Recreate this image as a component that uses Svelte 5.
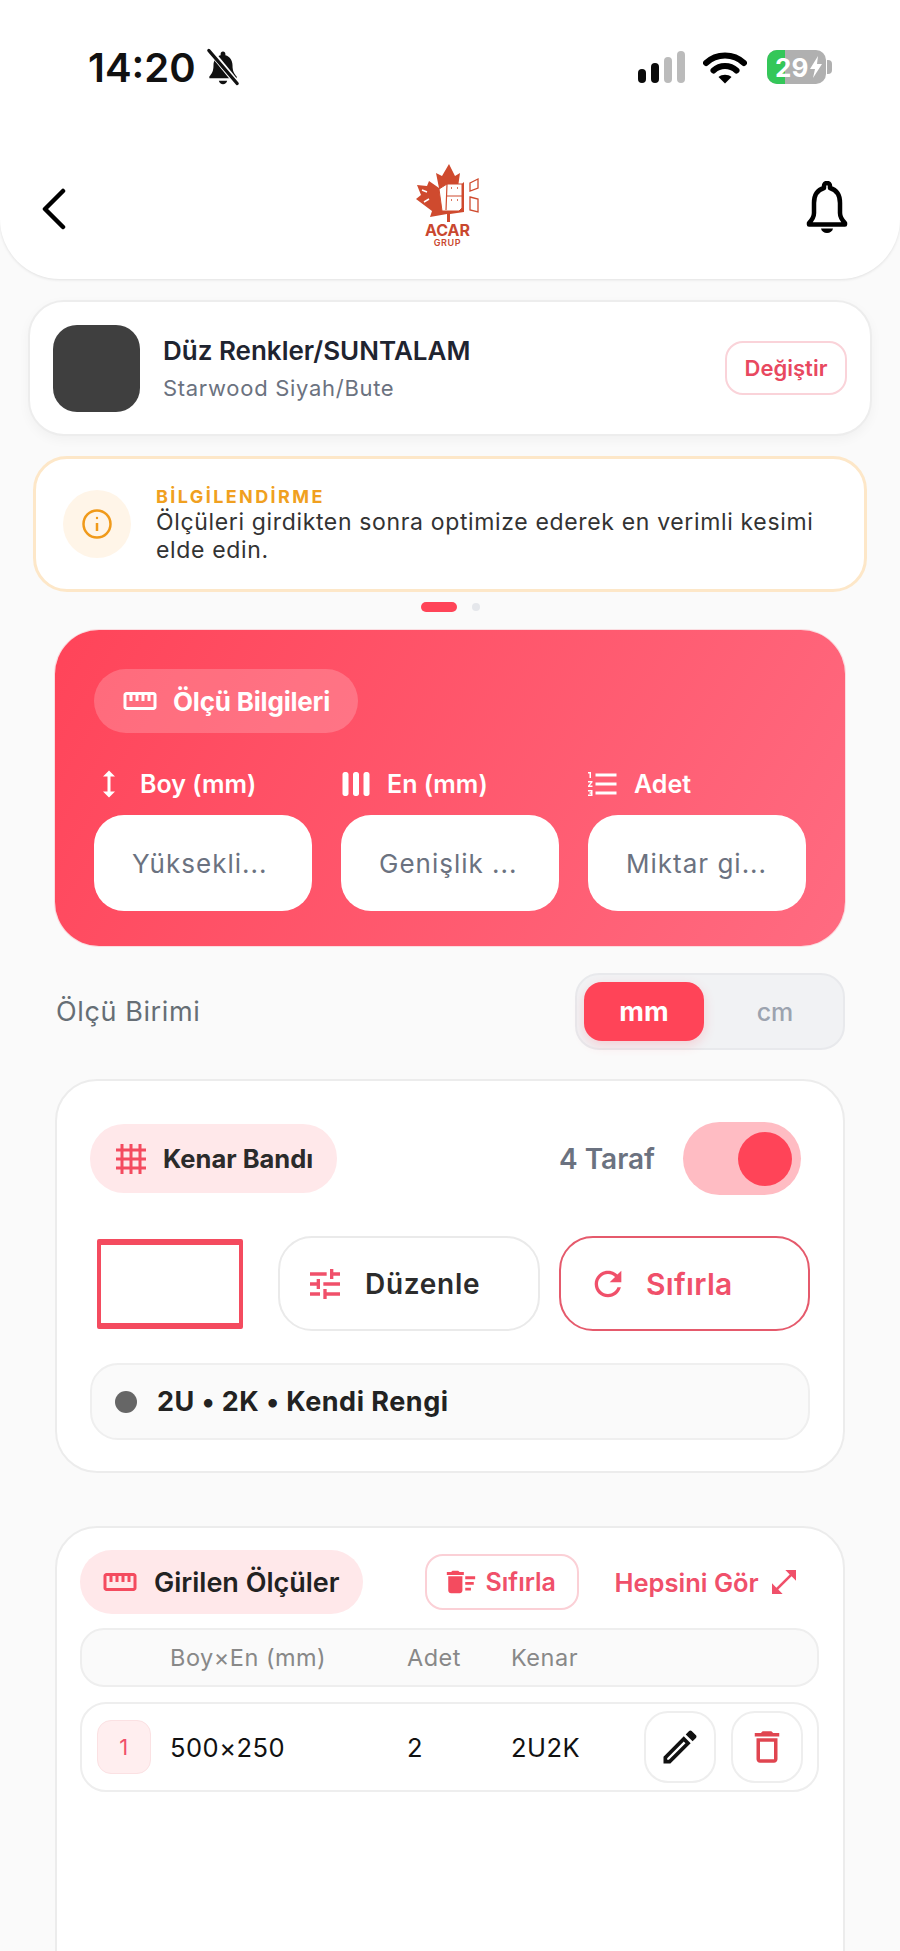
<script>
  const fields = [
    { label: 'Boy (mm)', hint: 'Yüksekli...', icon: 'M13 6.99h3L12 3 8 6.99h3v10.02H8L12 21l4-3.99h-3z' },
    { label: 'En (mm)', hint: 'Genişlik ...', icon: 'M3 5.5C3 4.7 3.7 4 4.5 4h1C6.3 4 7 4.7 7 5.5v13c0 .8-.7 1.5-1.5 1.5h-1C3.700 20 3 19.300 3 18.500zM10 5.500C10 4.700 10.700 4 11.500 4h1c.8 0 1.500.7 1.500 1.500v13c0 .8-.7 1.500-1.500 1.500h-1c-.8 0-1.500-.7-1.500-1.500zM17 5.500C17 4.700 17.700 4 18.500 4h1c.8 0 1.500.7 1.500 1.500v13c0 .8-.7 1.500-1.500 1.500h-1c-.8 0-1.500-.7-1.500-1.500z' },
    { label: 'Adet', hint: 'Miktar gi...', icon: 'M2 17h2v.5H3v1h1v.5H2v1h3v-4H2v1zm1-9h1V4H2v1h1v3zm-1 3h1.800L2 13.100v.9h3v-1H3.200L5 10.900V10H2v1zm5-6v2h14V5H7zm0 14h14v-2H7v2zm0-6h14v-2H7v2z' }
  ]
  const ruler = 'M21 6H3c-1.100 0-2 .9-2 2v8c0 1.100.9 2 2 2h18c1.100 0 2-.9 2-2V8c0-1.100-.9-2-2-2zm0 10H3V8h2v4h2V8h2v4h2V8h2v4h2V8h2v4h2V8h2v8z'
</script>

<div class="screen">
  <header class="top">
    <div class="status">
      <div class="clock">
        <span class="time">14:20</span>
        <svg class="silent" viewBox="0 0 32 32">
          <path d="M16 3c-1.300 0-2 .9-2 2v1c-4 1-6 4.500-6 8.500 0 5-1.300 7-3.500 9.500v1.500h23V24c-2.200-2.500-3.500-4.500-3.500-9.500 0-4-2-7.500-6-8.500V5c0-1.100-.7-2-2-2z" fill="#111" />
          <path d="M12.500 27.500h7c-.4 1.800-1.800 3-3.500 3s-3.100-1.200-3.500-3z" fill="#111" />
          <path d="M5 2l23 28" stroke="#fff" stroke-width="5" />
          <path d="M4 2l24 28" stroke="#111" stroke-width="2.600" stroke-linecap="round" />
        </svg>
      </div>
      <div class="sys">
        <div class="signal">
          <i class="on" style="height: 14px"></i>
          <i class="on" style="height: 20px"></i>
          <i style="height: 26px"></i>
          <i style="height: 32px"></i>
        </div>
        <svg class="wifi" viewBox="0 0 44 34">
          <path d="M3 13C13.500 3 30.500 3 41 13" />
          <path d="M10.500 20.500C17 14.500 27 14.500 33.500 20.500" />
          <path d="M22 33.500l-6.500-6.500c3.500-3 9.500-3 13 0z" class="wedge" />
        </svg>
        <div class="battery">
          <div class="cell">
            <span class="charge"></span>
            <span class="pct">29</span>
            <svg viewBox="0 0 14 24"><path d="M9 1L1 14h5l-2 9 9-14H8z" fill="#fff" /></svg>
          </div>
          <span class="nub"></span>
        </div>
      </div>
    </div>
    <div class="nav">
      <svg class="back" viewBox="0 0 26 42"><path d="M22 3L4 21l18 18" /></svg>
      <div class="logo">
        <svg viewBox="0 0 64 58">
          <path d="M33 0l6 12 5-3-2 14 6-5v30l-14 2v8h-3v-8l-17 3 2-6L0 35l5-4-4-10 10 1 2-5 10 7-3-15 6 3z" fill="#cf4a2e" />
          <path d="M23 25l8-5h15v24l-3 3H26z" fill="#fff" stroke="#cf4a2e" stroke-width="1" />
          <path d="M31 20l-1 26M31 32h15" stroke="#cf4a2e" stroke-width="1.200" fill="none" />
          <path d="M35 24h1M41 24h1M35 36h1M41 36h1" stroke="#cf4a2e" stroke-width="1.600" />
          <path d="M54 19l8-4v9l-8 3zM54 33l8 2v13l-8-2z" fill="#fff" stroke="#cf4a2e" stroke-width="1.300" />
          <path d="M6 26l5 2M8 38l5-3" stroke="#fff" stroke-width="1.500" />
        </svg>
        <span class="acar">ACAR</span>
        <span class="grup">GRUP</span>
      </div>
      <svg class="bell" viewBox="0 0 42 54">
        <path d="M21 2c-1.800 0-3 1.400-3 3v2C11 9 8 15 8 22v10c0 4-2 7-5 10v1.500h36V42c-3-3-5-6-5-10V22c0-7-3-13-10-15V5c0-1.600-1.200-3-3-3z" class="bell-body" />
        <path d="M15 47.500h12c-.6 2.800-3 4.500-6 4.500s-5.400-1.700-6-4.500z" fill="#000" />
      </svg>
    </div>
  </header>

  <main class="content">
    <section class="material">
      <div class="swatch"></div>
      <div class="material-text">
        <div class="material-name">Düz Renkler/SUNTALAM</div>
        <div class="material-sub">Starwood Siyah/Bute</div>
      </div>
      <button class="change">Değiştir</button>
    </section>

    <section class="notice">
      <div class="notice-icon">
        <svg viewBox="0 0 32 32">
          <circle cx="16" cy="16" r="13.500" />
          <path d="M16 15v8" />
          <circle cx="16" cy="10" r="1.200" class="info-dot" />
        </svg>
      </div>
      <div class="notice-text">
        <div class="notice-title">BİLGİLENDİRME</div>
        <p>Ölçüleri girdikten sonra optimize ederek en verimli kesimi elde edin.</p>
      </div>
    </section>

    <div class="dots"><span class="active"></span><span></span></div>

    <div class="inner">
      <section class="measure">
        <div class="measure-pill">
          <svg viewBox="0 0 24 24"><path d={ruler} /></svg>
          Ölçü Bilgileri
        </div>
        <div class="fields">
          {#each fields as f}
            <div class="field">
              <div class="field-label">
                <svg viewBox="0 0 24 24"><path d={f.icon} /></svg>
                {f.label}
              </div>
              <div class="input">{f.hint}</div>
            </div>
          {/each}
        </div>
      </section>

      <div class="unit-row">
        <span class="unit-label">Ölçü Birimi</span>
        <div class="segment">
          <span class="seg on">mm</span>
          <span class="seg">cm</span>
        </div>
      </div>

      <section class="panel edge">
        <div class="edge-head">
          <div class="pill big">
            <svg viewBox="0 0 24 24"><path d="M22 7V5h-3V2h-2v3h-4V2h-2v3H7V2H5v3H2v2h3v4H2v2h3v4H2v2h3v3h2v-3h4v3h2v-3h4v3h2v-3h3v-2h-3v-4h3v-2h-3V7h3zM7 7h4v4H7V7zm0 10v-4h4v4H7zm10 0h-4v-4h4v4zm0-6h-4V7h4v4z" /></svg>
            Kenar Bandı
          </div>
          <div class="sides">
            <span>4 Taraf</span>
            <div class="toggle"><i></i></div>
          </div>
        </div>
        <div class="edge-actions">
          <div class="preview"></div>
          <button class="action edit">
            <svg viewBox="0 0 24 24"><path d="M3 17v2h6v-2H3zM3 5v2h10V5H3zm10 16v-2h8v-2h-8v-2h-2v6h2zM7 9v2H3v2h4v2h2V9H7zm14 4v-2H11v2h10zm-6-4h2V7h4V5h-4V3h-2v6z" /></svg>
            Düzenle
          </button>
          <button class="action reset">
            <svg viewBox="0 0 24 24"><path d="M17.650 6.350C16.200 4.900 14.210 4 12 4c-4.420 0-7.990 3.580-7.990 8s3.570 8 7.990 8c3.730 0 6.840-2.550 7.730-6h-2.080c-.82 2.330-3.040 4-5.650 4-3.310 0-6-2.690-6-6s2.690-6 6-6c1.660 0 3.140.69 4.220 1.780L13 11h7V4l-2.350 2.350z" /></svg>
            Sıfırla
          </button>
        </div>
        <div class="summary">
          <i></i>
          2U • 2K • Kendi Rengi
        </div>
      </section>

      <section class="panel entries">
        <div class="entries-head">
          <div class="pill">
            <svg viewBox="0 0 24 24"><path d={ruler} /></svg>
            Girilen Ölçüler
          </div>
          <button class="clear">
            <svg viewBox="0 0 24 24"><path d="M15 16h4v2h-4zm0-8h7v2h-7zm0 4h6v2h-6zM3 18c0 1.100.9 2 2 2h6c1.100 0 2-.9 2-2V8H3v10zM14 5h-3l-1-1H6L5 5H2v2h12z" /></svg>
            Sıfırla
          </button>
          <button class="all">
            Hepsini Gör
            <svg viewBox="0 0 24 24"><path d="M21 11V3h-8l3.290 3.290-10 10L3 13v8h8l-3.290-3.290 10-10z" /></svg>
          </button>
        </div>
        <div class="thead">
          <span class="c1">Boy×En (mm)</span>
          <span class="c2">Adet</span>
          <span class="c3">Kenar</span>
        </div>
        <div class="trow">
          <span class="index">1</span>
          <span class="c1">500×250</span>
          <span class="c2">2</span>
          <span class="c3">2U2K</span>
          <div class="row-actions">
            <button class="icon-btn">
              <svg class="pencil" viewBox="0 0 24 24"><path d="M3 17.250V21h3.750L17.810 9.940l-3.750-3.750L3 17.250zM5.920 19H5v-.92l9.060-9.060.92.92L5.920 19zM20.710 7.040c.39-.39.39-1.020 0-1.410l-2.340-2.340c-.2-.2-.45-.29-.71-.29s-.51.1-.7.29l-1.830 1.830 3.750 3.750 1.830-1.830z" fill="#111" /></svg>
            </button>
            <button class="icon-btn">
              <svg viewBox="0 0 24 24"><path d="M6 19c0 1.100.9 2 2 2h8c1.100 0 2-.9 2-2V7H6v12zM8 9h8v10H8V9zm7.500-5l-1-1h-5l-1 1H5v2h14V4z" fill="#e04550" /></svg>
            </button>
          </div>
        </div>
      </section>
    </div>
  </main>
</div>

<style>
  :global(body) {
    margin: 0;
    background: #fafafa;
  }

  .screen {
    width: 900px;
    height: 1951px;
    overflow: hidden;
    background: #fafafa;
    font-family: Inter, "Noto Sans", sans-serif;
    color: #222;
  }

  button {
    font-family: inherit;
    background: #fff;
    cursor: pointer;
  }

  svg {
    display: block;
    flex: none;
  }

  .top {
    height: 279px;
    box-sizing: border-box;
    background: #fff;
    border-radius: 0 0 60px 60px;
    box-shadow: 0 1px 3px rgba(0, 0, 0, 0.1);
    padding: 46px 28px 0 36px;
  }

  .status {
    display: flex;
    justify-content: space-between;
    align-items: center;
    height: 42px;
    padding: 0 40px 0 52px;
  }

  .clock {
    display: flex;
    align-items: center;
    gap: 8px;
  }

  .time {
    font-size: 40px;
    font-weight: 600;
    color: #111;
  }

  .silent {
    width: 38px;
    height: 38px;
  }

  .sys {
    display: flex;
    align-items: center;
  }

  .signal {
    display: flex;
    align-items: flex-end;
    gap: 5px;
    height: 32px;
    margin-right: 18px;
  }

  .signal i {
    width: 8px;
    border-radius: 4px;
    background: #bbb;
  }

  .signal i.on {
    background: #0a0a0a;
  }

  .wifi {
    width: 44px;
    height: 34px;
    margin-right: 20px;
  }

  .wifi path {
    fill: none;
    stroke: #000;
    stroke-width: 6;
    stroke-linecap: round;
  }

  .wifi path.wedge {
    fill: #000;
    stroke: none;
  }

  .battery {
    display: flex;
    align-items: center;
    gap: 1px;
  }

  .cell {
    position: relative;
    width: 59px;
    height: 34px;
    border-radius: 10px;
    background: #b0b0b0;
    overflow: hidden;
    display: flex;
    align-items: center;
    padding-left: 8px;
    box-sizing: border-box;
    gap: 1px;
  }

  .charge {
    position: absolute;
    inset: 0 auto 0 0;
    width: 18px;
    background: #34c759;
  }

  .pct {
    position: relative;
    color: #fff;
    font-size: 26px;
    font-weight: 700;
  }

  .cell svg {
    position: relative;
    width: 14px;
    height: 24px;
  }

  .nub {
    width: 5px;
    height: 14px;
    border-radius: 0 4px 4px 0;
    background: #b0b0b0;
  }

  .nav {
    display: flex;
    justify-content: space-between;
    align-items: flex-start;
    margin-top: 76px;
    padding-right: 24px;
  }

  .back {
    width: 26px;
    height: 42px;
    margin-top: 24px;
    margin-left: 5px;
  }

  .back path {
    fill: none;
    stroke: #000;
    stroke-width: 4.500;
    stroke-linecap: round;
    stroke-linejoin: round;
  }

  .logo {
    display: flex;
    flex-direction: column;
    align-items: center;
    width: 66px;
    margin-left: 22px;
  }

  .logo svg {
    width: 66px;
    height: 58px;
  }

  .acar {
    font-size: 16px;
    line-height: 16px;
    font-weight: 700;
    color: #c9472f;
  }

  .grup {
    font-size: 9px;
    line-height: 10px;
    font-weight: 600;
    letter-spacing: 0.6px;
    color: #c9472f;
  }

  .bell {
    width: 42px;
    height: 54px;
    margin-top: 17px;
  }

  .bell-body {
    fill: none;
    stroke: #000;
    stroke-width: 4.500;
    stroke-linejoin: round;
  }

  .content {
    padding-top: 21px;
  }

  .material {
    display: flex;
    align-items: center;
    height: 136px;
    box-sizing: border-box;
    margin: 0 28px;
    padding: 0 23px 0 23px;
    background: #fff;
    border: 2px solid #ededed;
    border-radius: 36px;
    box-shadow: 0 4px 12px rgba(0, 0, 0, 0.04);
  }

  .swatch {
    width: 87px;
    height: 87px;
    border-radius: 24px;
    background: #3f3f3f;
  }

  .material-text {
    flex: 1;
    margin-left: 23px;
  }

  .material-name {
    font-size: 26px;
    font-weight: 600;
    color: #1f2430;
  }

  .material-sub {
    margin-top: 9px;
    font-size: 22px;
    letter-spacing: 0.7px;
    color: #6b7280;
  }

  .change {
    width: 122px;
    height: 54px;
    border: 2px solid #fad3d9;
    border-radius: 18px;
    font-size: 22px;
    font-weight: 600;
    color: #e8485f;
    padding: 0;
  }

  .notice {
    display: flex;
    align-items: center;
    height: 136px;
    box-sizing: border-box;
    margin: 20px 33px 0;
    padding: 0 27px;
    background: #fff;
    border: 3px solid #fde7c8;
    border-radius: 34px;
  }

  .notice-icon {
    width: 68px;
    height: 68px;
    border-radius: 50%;
    background: #fff5e8;
    display: flex;
    align-items: center;
    justify-content: center;
    flex: none;
  }

  .notice-icon svg {
    width: 32px;
    height: 32px;
    fill: none;
    stroke: #f09a1a;
    stroke-width: 2.500;
  }

  .info-dot {
    fill: #f09a1a;
    stroke: none;
  }

  .notice-text {
    margin-left: 25px;
    padding-top: 2px;
  }

  .notice-title {
    font-size: 18px;
    line-height: 21px;
    font-weight: 700;
    letter-spacing: 2.400px;
    color: #f0a020;
  }

  .notice-text p {
    margin: 1px 0 0;
    font-size: 23px;
    line-height: 28px;
    letter-spacing: 0.650px;
    color: #333;
  }

  .dots {
    display: flex;
    justify-content: center;
    align-items: center;
    gap: 15px;
    height: 10px;
    margin-top: 10px;
  }

  .dots span {
    width: 8px;
    height: 8px;
    border-radius: 50%;
    background: #e5e7eb;
  }

  .dots span.active {
    width: 36px;
    height: 10px;
    border-radius: 5px;
    background: #ff4458;
  }

  .inner {
    margin: 18px 55px 0;
  }

  .measure {
    height: 316px;
    box-sizing: border-box;
    padding: 39px 39px 0;
    border-radius: 44px;
    background: linear-gradient(120deg, #ff4459, #ff6b81);
    box-shadow: 0 0 0 1px rgba(255, 100, 120, 0.2);
  }

  .measure-pill {
    display: inline-flex;
    align-items: center;
    gap: 15px;
    height: 64px;
    padding: 0 28px;
    border-radius: 32px;
    background: rgba(255, 255, 255, 0.2);
    font-size: 26px;
    font-weight: 700;
    letter-spacing: -0.2px;
    color: #fff;
  }

  .measure-pill svg {
    width: 36px;
    height: 36px;
    fill: #fff;
  }

  .fields {
    display: grid;
    grid-template-columns: repeat(3, 1fr);
    gap: 29px;
    margin-top: 33px;
  }

  .field-label {
    display: flex;
    align-items: center;
    gap: 13px;
    height: 36px;
    font-size: 25px;
    font-weight: 600;
    color: #fff;
  }

  .field-label svg {
    width: 36px;
    height: 36px;
    margin-left: -3px;
    fill: #fff;
  }

  .input {
    display: flex;
    align-items: center;
    height: 96px;
    margin-top: 13px;
    padding-left: 38px;
    background: #fff;
    border-radius: 30px;
    font-size: 26px;
    letter-spacing: 1px;
    color: #6b7280;
  }

  .unit-row {
    display: flex;
    justify-content: space-between;
    align-items: center;
    margin-top: 27px;
    padding-left: 1px;
  }

  .unit-label {
    font-size: 27px;
    letter-spacing: 0.6px;
    color: #666e75;
  }

  .segment {
    display: flex;
    align-items: center;
    width: 270px;
    height: 77px;
    box-sizing: border-box;
    padding: 0 7px;
    background: #f1f2f4;
    border: 2px solid #e8e9ec;
    border-radius: 24px;
  }

  .seg {
    flex: 1;
    padding-left: 10px;
    text-align: center;
    font-size: 25px;
    font-weight: 500;
    color: #9ca3af;
  }

  .seg.on {
    flex: none;
    width: 120px;
    height: 59px;
    padding: 0;
    line-height: 59px;
    border-radius: 18px;
    background: #ff4458;
    color: #fff;
    font-size: 27px;
    font-weight: 700;
    box-shadow: 0 4px 12px rgba(255, 68, 88, 0.2);
  }

  .panel {
    box-sizing: border-box;
    background: #fff;
    border: 2px solid #ececec;
    border-radius: 42px;
  }

  .edge {
    height: 394px;
    margin-top: 29px;
    padding: 41px 33px 0;
  }

  .edge-head {
    display: flex;
    justify-content: space-between;
    align-items: center;
    padding-right: 9px;
  }

  .pill {
    display: inline-flex;
    align-items: center;
    gap: 16px;
    height: 64px;
    padding: 0 25px;
    border-radius: 34px;
    background: #ffe8ea;
    font-size: 27px;
    font-weight: 600;
    color: #222;
  }

  .pill svg {
    width: 36px;
    height: 36px;
    fill: #f44b5f;
  }

  .pill.big {
    height: 69px;
    gap: 14px;
    padding: 0 24px 0 23px;
    font-size: 25.500px;
    font-weight: 700;
    color: #2b2b2b;
  }

  .sides {
    display: flex;
    align-items: center;
    gap: 28px;
    font-size: 28px;
    font-weight: 600;
    color: #6b7280;
  }

  .toggle {
    display: flex;
    align-items: center;
    justify-content: flex-end;
    width: 118px;
    height: 73px;
    box-sizing: border-box;
    padding-right: 9px;
    border-radius: 37px;
    background: #ffbcc3;
  }

  .toggle i {
    width: 54px;
    height: 54px;
    border-radius: 50%;
    background: #ff4458;
  }

  .edge-actions {
    display: flex;
    align-items: center;
    margin-top: 41px;
  }

  .preview {
    width: 146px;
    height: 90px;
    box-sizing: border-box;
    margin-left: 7px;
    border: solid #f44b5f;
    border-width: 6px 4px;
    border-radius: 2px;
  }

  .action {
    display: flex;
    align-items: center;
    height: 95px;
    box-sizing: border-box;
    padding: 0;
    border-radius: 34px;
    font-weight: 600;
  }

  .action svg {
    width: 40px;
    height: 40px;
  }

  .edit {
    width: 262px;
    margin-left: 35px;
    padding-left: 25px;
    gap: 20px;
    border: 2px solid #eaeaea;
    font-size: 28px;
    letter-spacing: 0.7px;
    color: #2c2c2c;
  }

  .edit svg {
    fill: #f0506a;
  }

  .reset {
    width: 251px;
    margin-left: 19px;
    padding-left: 27px;
    gap: 18px;
    border: 2.500px solid #e55a6c;
    font-size: 30px;
    letter-spacing: 0.3px;
    color: #f0506a;
  }

  .reset svg {
    fill: #f0506a;
  }

  .summary {
    display: flex;
    align-items: center;
    height: 77px;
    box-sizing: border-box;
    margin-top: 32px;
    padding-left: 23px;
    background: #fafafa;
    border: 2px solid #efefef;
    border-radius: 28px;
    font-size: 27px;
    font-weight: 700;
    letter-spacing: 0.5px;
    color: #222;
  }

  .summary i {
    width: 22px;
    height: 22px;
    margin-right: 20px;
    border-radius: 50%;
    background: #666;
  }

  .entries {
    height: 600px;
    margin-top: 53px;
    padding: 22px 24px 0 23px;
  }

  .entries-head {
    display: flex;
    align-items: center;
  }

  .entries-head .pill {
    padding: 0 23px 0 22px;
  }

  .clear {
    display: flex;
    align-items: center;
    gap: 8px;
    width: 154px;
    height: 56px;
    box-sizing: border-box;
    padding: 0 0 0 17px;
    margin-left: 62px;
    border: 2px solid #fbd0d6;
    border-radius: 18px;
    font-size: 25px;
    font-weight: 600;
    color: #f0506a;
  }

  .clear svg {
    width: 34px;
    height: 34px;
    fill: #f44b5f;
  }

  .all {
    display: flex;
    align-items: center;
    gap: 9px;
    padding: 0;
    margin-left: 36px;
    border: 0;
    background: none;
    font-size: 25.500px;
    font-weight: 600;
    color: #f0506a;
    white-space: nowrap;
  }

  .all svg {
    width: 32px;
    height: 32px;
    fill: #f0506a;
  }

  .thead,
  .trow {
    display: flex;
    align-items: center;
    box-sizing: border-box;
  }

  .thead {
    height: 59px;
    margin-top: 14px;
    padding-left: 88px;
    background: #fafafa;
    border: 2px solid #eee;
    border-radius: 24px;
    font-size: 23.500px;
    letter-spacing: 0.5px;
    color: #888;
  }

  .trow {
    height: 90px;
    margin-top: 15px;
    padding: 0 14px 0 15px;
    border: 2px solid #eee;
    border-radius: 26px;
    font-size: 25.500px;
    letter-spacing: 0.5px;
    color: #111;
  }

  .index {
    width: 54px;
    height: 54px;
    box-sizing: border-box;
    margin-right: 19px;
    line-height: 52px;
    text-align: center;
    background: #ffeeef;
    border: 1px solid #fbe1e3;
    border-radius: 14px;
    font-size: 22px;
    color: #f0506a;
  }

  .c1 {
    width: 237px;
  }

  .c2 {
    width: 104px;
  }

  .row-actions {
    display: flex;
    gap: 15px;
    margin-left: auto;
  }

  .icon-btn {
    display: flex;
    align-items: center;
    justify-content: center;
    width: 72px;
    height: 72px;
    padding: 0;
    border: 2px solid #eee;
    border-radius: 24px;
  }

  .icon-btn svg {
    width: 42px;
    height: 42px;
  }

  .icon-btn svg.pencil {
    width: 44px;
    height: 44px;
  }
</style>
